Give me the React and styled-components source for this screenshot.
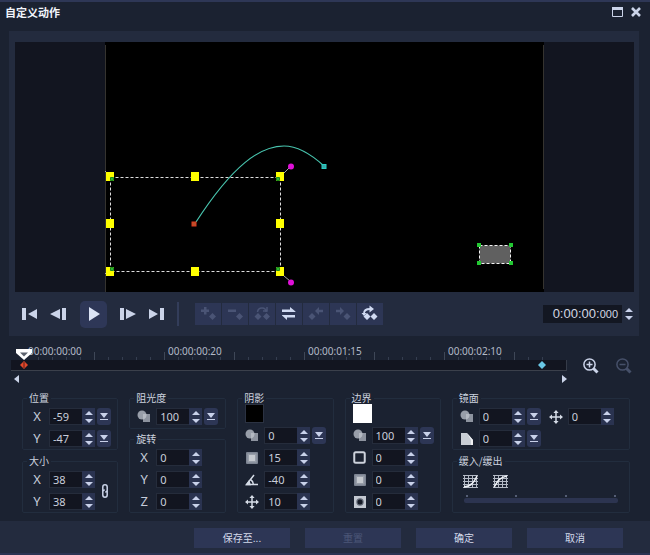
import React, { useId, useState } from "react";
import styled, { createGlobalStyle } from "styled-components";

const GlobalStyle = createGlobalStyle`
  *, *::before, *::after { box-sizing: border-box; }
  body {
    margin: 0;
    background: #1b2231;
    color: #c9d0e0;
    font-family: "Noto Sans", "Noto Sans CJK SC", sans-serif;
    font-size: 10px;
    line-height: 12px;
  }
  button, input { font: inherit; color: inherit; margin: 0; }
  button { border: 0; padding: 0; background: none; }
  svg { display: block; }
`;

const Window = styled.div`
  display: flex;
  flex-direction: column;
  min-height: 100vh;
  border-top: 2px solid #2e3756;
  border-bottom: 2px solid #2b3352;
`;

const TitleBar = styled.header`
  display: flex;
  align-items: center;
  justify-content: space-between;
  height: 29px;
  padding: 0 9px 9px 5px;
`;

const Title = styled.h1`
  margin: 0;
  font-family: "Noto Sans CJK SC", sans-serif;
  font-size: 11px;
  line-height: 18px;
  font-weight: 700;
  color: #f2f5fb;
`;

const WindowButtons = styled.div`
  display: flex;
  gap: 8px;
`;

const Player = styled.section`
  margin: 0 11px 0 9px;
  padding: 11px 5px 0 6px;
  background: #232b3e;
`;

const Stage = styled.div`
  display: grid;
  grid-template-columns: 90fr 439fr 90fr;
  background: #121520;
`;

const StageDrawing = styled.svg`
  grid-column: 2;
  width: 100%;
  background: #000;
`;

const Controls = styled.div`
  display: flex;
  align-items: center;
  height: 44px;
`;

const Transport = styled.div`
  display: flex;
  align-items: center;
  gap: 12px;
  padding-left: 7px;
`;

const PlayButton = styled.button`
  display: grid;
  place-items: center;
  width: 27px;
  height: 27px;
  margin: 0 1px 0 2px;
  border-radius: 5px;
  background: #2e3757;
`;

const Divider = styled.span`
  width: 2px;
  height: 24px;
  margin: 0 16px 0 13px;
  background: #333d5a;
`;

const KeyTools = styled.div`
  display: flex;
  gap: 1px;
`;

const KeyTool = styled.button`
  width: 26px;
  height: 22px;
  background: #2d3655;
  color: ${(p) => (p.disabled ? "#4a5475" : "#d0daf2")};
`;

const TimeField = styled.div`
  display: flex;
  align-items: center;
  gap: 2px;
  margin-left: auto;
`;

const TimeCode = styled.output`
  padding: 0 4px 0 10px;
  background: #131722;
  color: #d3d8e4;
  font-family: "Liberation Sans", sans-serif;
  font-size: 13px;
  line-height: 18px;
  small { font-size: 11px; }
`;

const TimelineBar = styled.section`
  display: grid;
  grid-template-columns: minmax(0, 1fr) auto;
  padding: 8px 18px 0 11px;
`;

const Timeline = styled.div`
  position: relative;
`;

const Ruler = styled.div`
  display: grid;
  grid-template-columns: repeat(4, 140px);
  height: 16px;
  padding-left: 17px;
  overflow: hidden;
  color: #b2b9c6;
  background:
    repeating-linear-gradient(90deg, #3e4757 0 1px, transparent 1px 70px) 13px 100% / 519px 8px no-repeat,
    repeating-linear-gradient(90deg, #353e50 0 1px, transparent 1px 14px) 13px 100% / 519px 3px no-repeat;
`;

const RulerLabel = styled.span`
  justify-self: start;
  height: 13px;
  line-height: 14px;
  background: #1b2231;
`;

const Track = styled.div`
  height: 11px;
  background: #121520;
  border-right: 1px solid #353b48;
  border-bottom: 1px solid #3b404b;
`;

const Marker = styled.svg`
  position: absolute;
  left: ${(p) => p.$left};
  top: ${(p) => p.$top}px;
`;

const ScrollRow = styled.div`
  display: flex;
  justify-content: space-between;
  padding: 4px 0 0 3px;
`;

const ZoomTools = styled.div`
  display: flex;
  align-items: flex-start;
  gap: 16px;
  padding: 14px 0 0 15px;
`;

const Properties = styled.form`
  display: grid;
  grid-template-columns: 96fr 97fr 96fr 96fr 178fr;
  gap: 11px;
  padding: 9px 20px 8px 22px;
`;

const Column = styled.div`
  display: flex;
  flex-direction: column;
  gap: ${(p) => p.$gap || 5}px;
  min-width: 0;
`;

const Group = styled.fieldset`
  flex: ${(p) => (p.$grow ? 1 : "none")};
  min-width: 0;
  margin: 0;
  padding: ${(p) => (p.$flush ? 0 : 4)}px 3px 2px 4px;
  border: 1px solid #222d3e;
  border-radius: 2px;
`;

const Legend = styled.legend`
  padding: 0 2px;
  font-family: "Noto Sans CJK SC", sans-serif;
  line-height: 12px;
  color: #ccd2df;
`;

const Rows = styled.div`
  display: flex;
  flex-direction: column;
  gap: 5px;
`;

const Split = styled.div`
  display: flex;
  align-items: center;
  gap: ${(p) => p.$gap}px;
`;

const FieldRow = styled.div`
  display: flex;
  align-items: center;
  height: 17px;
`;

const FieldLabel = styled.label`
  display: grid;
  place-items: center;
  width: 20px;
  margin-right: 2px;
  font-size: 13px;
  line-height: 17px;
  color: #c5ccda;
`;

const NumberInput = styled.input`
  width: 33px;
  height: 17px;
  padding: 0 3px;
  border: 1px solid #252c3b;
  border-right: 0;
  border-radius: 0;
  background: #121520;
  color: #c9cedb;
  font-size: 11px;
  outline: 0;
`;

const SpinBox = styled.span`
  display: flex;
  flex-direction: column;
  justify-content: center;
  gap: 4px;
  width: ${(p) => (p.$bare ? 10 : 13)}px;
  height: 17px;
  background: ${(p) => (p.$bare ? "transparent" : "#2a3350")};
`;

const SpinButton = styled.button`
  display: grid;
  place-items: center;
  color: #c8d1ea;
`;

const DropButton = styled.button`
  display: grid;
  place-items: center;
  width: 14px;
  height: 17px;
  margin-left: 2px;
  border-radius: 3px;
  background: #2d3655;
  color: #c8d1ea;
`;

const Swatch = styled.button`
  display: block;
  width: 19px;
  height: 19px;
  margin: 0 0 4px 3px;
  border: 1px solid ${(p) => (p.$color === "#000" ? "#2b3242" : "#fff")};
  background: ${(p) => p.$color};
`;

const EaseTools = styled.div`
  display: flex;
  gap: 15px;
  padding: 4px 0 7px 6px;
`;

const EaseTicks = styled.div`
  display: flex;
  justify-content: space-between;
  padding: 0 10px 0 9px;
  i { width: 2px; height: 2px; background: #555e75; }
`;

const EaseSlider = styled.input`
  appearance: none;
  display: block;
  width: calc(100% - 15px);
  height: 5px;
  margin: 1px 8px 0 7px;
  border-radius: 2px;
  background: #2c3450;
  &::-webkit-slider-thumb { appearance: none; width: 0; height: 0; }
`;

const Footer = styled.footer`
  display: flex;
  flex: 1;
  align-items: flex-start;
  justify-content: flex-end;
  gap: 15px;
  padding: 7px 27px 5px;
  background: #232b3e;
`;

const ActionButton = styled.button`
  width: 96px;
  height: 20px;
  background: #2d3655;
  color: ${(p) => (p.disabled ? "#4c5678" : "#d3daea")};
  font-family: "Noto Sans CJK SC", sans-serif;
`;

const IconButton = styled.button`
  display: block;
  color: ${(p) => (p.disabled ? "#465069" : "#cbd4e9")};
`;

function Triangle({ down }) {
  return (
    <svg width="8" height="4" viewBox="0 0 8 4" fill="currentColor">
      <path d={down ? "M0 0h8L4 4z" : "M0 4h8L4 0z"} />
    </svg>
  );
}

function Spinner({ bare, name, onStep }) {
  return (
    <SpinBox $bare={bare}>
      <SpinButton type="button" aria-label={`${name} +`} onClick={() => onStep?.(1)}><Triangle /></SpinButton>
      <SpinButton type="button" aria-label={`${name} -`} onClick={() => onStep?.(-1)}><Triangle down /></SpinButton>
    </SpinBox>
  );
}

function Field({ label, icon, value, drop }) {
  const id = useId();
  const [current, setCurrent] = useState(String(value));
  return (
    <FieldRow>
      <FieldLabel htmlFor={id} aria-label={label}>{icon || label}</FieldLabel>
      <NumberInput id={id} value={current} onChange={(e) => setCurrent(e.target.value)} />
      <Spinner name={label} onStep={(d) => setCurrent(String((Number(current) || 0) + d))} />
      {drop && (
        <DropButton type="button" aria-label={`${label} 选项`}>
          <svg width="8" height="8" viewBox="0 0 8 8" fill="currentColor">
            <path d="M0 0h8L4 5zM0 6h8v1H0z" />
          </svg>
        </DropButton>
      )}
    </FieldRow>
  );
}

const OpacityIcon = (
  <svg width="14" height="13" viewBox="0 0 14 13">
    <path d="M6 4h7v8H6z" fill="#8d939f" />
    <circle cx="5" cy="5" r="4.500" fill="#989ea9" />
    <path d="M6 4h3.400A4.500 4.500 0 0 1 6 9.400z" fill="#b4b9c2" />
  </svg>
);
const SoftIcon = (
  <svg width="12" height="12" viewBox="0 0 12 12">
    <rect width="12" height="12" rx="1" fill="#7d8492" />
    <rect x="1.500" y="1.500" width="9" height="9" fill="#989ea9" />
    <rect x="3" y="3" width="6" height="6" fill="#c5c9cf" />
  </svg>
);
const AngleIcon = (
  <svg width="14" height="12" viewBox="0 0 14 12" fill="none" stroke="#d5dbe6" strokeWidth="1.500">
    <path d="M9 1L1.500 10.500H13M5.500 5.500Q8 7 8.500 10.500" />
    <path d="M4 7.500L2 10.500H5z" fill="#d5dbe6" />
  </svg>
);
const MoveIcon = (
  <svg width="14" height="14" viewBox="0 0 14 14">
    <path d="M7 2v10M2 7h10" stroke="#d5dbe6" strokeWidth="1.500" />
    <path d="M7 0l2.600 3H4.400zM7 14l2.600-3H4.400zM0 7l3-2.600v5.200zM14 7l-3-2.600v5.200z" fill="#d5dbe6" />
  </svg>
);
const FrameIcon = (
  <svg width="13" height="13" viewBox="0 0 13 13">
    <rect x="1.250" y="1.250" width="10.500" height="10.500" rx="1.500" fill="none" stroke="#cdd2dc" strokeWidth="2" />
  </svg>
);
const BlurDotIcon = (
  <svg width="12" height="12" viewBox="0 0 12 12">
    <rect width="12" height="12" fill="#c3c8d1" />
    <circle cx="6" cy="6" r="3.700" fill="#636a77" />
    <circle cx="6" cy="6" r="2.500" fill="#151a26" />
  </svg>
);
const FadeIcon = (
  <svg width="14" height="12" viewBox="0 0 14 12">
    <path d="M1 0h6l6 7v5H1z" fill="#c9ced6" />
    <path d="M7 0l6 7v5h-2V7z" fill="#eef0f3" />
  </svg>
);

function EaseIcon({ out }) {
  return (
    <svg width="15" height="13" viewBox="0 0 15 13" fill="none">
      <path d="M0 .5h15M0 3.500h15M0 6.500h15M0 9.500h15M0 12.500h15M1.500 0v13M5.500 0v13M9.500 0v13M13.500 0v13" stroke="#b4bac6" strokeWidth="1" />
      <path d={out ? "M1 12C4 9 4 3 14 1" : "M1 12C9 11 11 7 14 1"} stroke="#eef1f6" strokeWidth="1.600" />
    </svg>
  );
}

const keyTools = [
  { name: "添加关键帧", off: true, art: <><path d="M9 4h2.500v2.500H14V9h-2.500v2.500H9V9H6V6.500h3z" /><path d="M17.500 10l3.500 3.500-3.500 3.500-3.500-3.500z" /></> },
  { name: "移除关键帧", off: true, art: <><path d="M6 6.500h8V9H6z" /><path d="M17.500 10l3.500 3.500-3.500 3.500-3.500-3.500z" /></> },
  { name: "旋转关键帧", off: true, art: <><path d="M9 10l3.500 3.500L9 17l-3.500-3.500zM17.500 10l3.500 3.500-3.500 3.500-3.500-3.500z" /><path d="M8.500 9Q9 5 13 5q4 0 4 4M14 8h4V4" fill="none" stroke="currentColor" strokeWidth="1.500" /></> },
  { name: "反转关键帧", art: <path d="M6 6.500h8V4l5.500 4.500V9H6zM19 12v2.500h-8V17L6 12.500V12z" /> },
  { name: "左移关键帧", off: true, art: <><path d="M9 10l3.500 3.500L9 17l-3.500-3.500z" /><path d="M12 8l4-4v2.700h4v2.600h-4V12z" /></> },
  { name: "右移关键帧", off: true, art: <><path d="M17 10l3.500 3.500L17 17l-3.500-3.500z" /><path d="M14 8l-4-4v2.700H6v2.600h4V12z" /></> },
  { name: "定位中心", art: <><path d="M10 10l3.500 3.500L10 17l-3.500-3.500zM17 10l3.500 3.500L17 17l-3.500-3.500z" /><path d="M7 10.500Q7 6 13 6" fill="none" stroke="currentColor" strokeWidth="1.800" /><path d="M12.500 2.500L17 6l-4.500 3.500zM4.500 10h5L7 13z" /></> },
];

const handles = [[1, 130], [86, 130], [171, 130], [1, 177], [171, 177], [1, 225], [86, 225], [171, 225]];

function Scene() {
  return (
    <StageDrawing viewBox="0 0 439 250" role="img" aria-label="动作路径">
      <path d="M.5 3v247M438.500 3v244" stroke="#35332f" />
      <path d="M0 129l3 3M0 232l3-3M179 131l6-6M179 234l6 5" stroke="#aaa" />
      <rect x="5.500" y="135.500" width="170" height="94" fill="none" stroke="#dedede" strokeDasharray="3 2" />
      <path d="M91 180C128 123 155 104 179 104C194 104 207 113 219 124" fill="none" stroke="#48c4ae" strokeWidth="1.200" />
      {handles.map(([x, y]) => <rect key={`${x}-${y}`} x={x} y={y} width="8" height="9" fill="#ff0" />)}
      <g fill="#2fb533" stroke="#1c8a18">
        <path d="M5.500 135.500h3v3h-3zM171.500 135.500h3v3h-3zM5.500 225.500h3v3h-3zM171.500 225.500h3v3h-3z" />
      </g>
      <circle cx="186" cy="124.500" r="3" fill="#e010d8" />
      <circle cx="186" cy="240.500" r="3" fill="#e010d8" />
      <rect x="87" y="180" width="4" height="4" fill="#b5532f" stroke="#e03a1c" />
      <rect x="217" y="122.500" width="4" height="4" fill="#3aa8a8" stroke="#25cfc4" />
      <rect x="374.500" y="203.500" width="31" height="18" fill="#606060" stroke="#f3f3f3" strokeDasharray="3 2" />
      <path d="M372 201h4v4h-4zM404 201h4v4h-4zM372 219h4v4h-4zM404 219h4v4h-4z" fill="#22c832" />
    </StageDrawing>
  );
}

export default function App() {
  return (
    <>
      <GlobalStyle />
      <Window>
        <TitleBar>
          <Title>自定义动作</Title>
          <WindowButtons>
            <IconButton type="button" aria-label="最大化">
              <svg width="11" height="10" viewBox="0 0 11 10"><path d="M.5 1v8.500h10V1z" fill="none" stroke="currentColor" /><path d="M0 0h11v3H0z" fill="currentColor" /></svg>
            </IconButton>
            <IconButton type="button" aria-label="关闭">
              <svg width="10" height="10" viewBox="0 0 10 10" stroke="currentColor" strokeWidth="2.600"><path d="M1 1l8 8M9 1L1 9" /></svg>
            </IconButton>
          </WindowButtons>
        </TitleBar>

        <Player>
          <Stage><Scene /></Stage>
          <Controls>
            <Transport>
              <IconButton type="button" aria-label="起始">
                <svg width="16" height="12" viewBox="0 0 16 12" fill="currentColor"><path d="M0 0h4v12H0zM15 1v10L6 6z" /></svg>
              </IconButton>
              <IconButton type="button" aria-label="上一帧">
                <svg width="16" height="12" viewBox="0 0 16 12" fill="currentColor"><path d="M12 0h4v12h-4zM10 1v10L0 6z" /></svg>
              </IconButton>
              <PlayButton type="button" aria-label="播放">
                <svg width="12" height="14" viewBox="0 0 12 14" fill="#dbe3f5"><path d="M1 0l11 7-11 7z" /></svg>
              </PlayButton>
              <IconButton type="button" aria-label="下一帧">
                <svg width="16" height="12" viewBox="0 0 16 12" fill="currentColor"><path d="M0 0h4v12H0zM6 1v10l10-5z" /></svg>
              </IconButton>
              <IconButton type="button" aria-label="结束">
                <svg width="16" height="12" viewBox="0 0 16 12" fill="currentColor"><path d="M12 0h4v12h-4zM1 1v10l9-5z" /></svg>
              </IconButton>
            </Transport>
            <Divider />
            <KeyTools>
              {keyTools.map((t) => (
                <KeyTool key={t.name} type="button" aria-label={t.name} disabled={t.off}>
                  <svg width="26" height="22" viewBox="0 0 26 22" fill="currentColor">{t.art}</svg>
                </KeyTool>
              ))}
            </KeyTools>
            <TimeField>
              <TimeCode>0:00:00:<small>000</small></TimeCode>
              <Spinner bare name="时间码" />
            </TimeField>
          </Controls>
        </Player>

        <TimelineBar>
          <Timeline>
            <Ruler>
              {["00:00:00:00", "00:00:00:20", "00:00:01:15", "00:00:02:10"].map((t) => <RulerLabel key={t}>{t}</RulerLabel>)}
            </Ruler>
            <Track />
            <Marker $left="5px" $top={5} width="16" height="11" viewBox="0 0 16 11">
              <path d="M0 0h16v4L8 11 0 4z" fill="#fff" /><path d="M4 3.500h8L8 7.500z" fill="#5b616c" />
            </Marker>
            <Marker $left="9px" $top={17} width="8" height="8" viewBox="0 0 8 8">
              <path d="M4 0l4 4-4 4-4-4z" fill="#e4482a" /><path d="M3.500 1h1v6h-1z" fill="#541e1b" />
            </Marker>
            <Marker $left="calc(100% - 29px)" $top={17} width="8" height="8" viewBox="0 0 8 8">
              <path d="M4 0l4 4-4 4-4-4z" fill="#69c8e6" />
            </Marker>
            <ScrollRow>
              <IconButton type="button" aria-label="向左滚动"><svg width="5" height="8" viewBox="0 0 5 8" fill="currentColor"><path d="M5 0v8L0 4z" /></svg></IconButton>
              <IconButton type="button" aria-label="向右滚动"><svg width="5" height="8" viewBox="0 0 5 8" fill="currentColor"><path d="M0 0v8l5-4z" /></svg></IconButton>
            </ScrollRow>
          </Timeline>
          <ZoomTools>
            {[false, true].map((out) => (
              <IconButton key={String(out)} type="button" disabled={out} aria-label={out ? "缩小" : "放大"}>
                <svg width="17" height="16" viewBox="0 0 17 16" fill="none" stroke="currentColor" strokeWidth="1.500">
                  <circle cx="7.500" cy="6.500" r="5.600" />
                  <path d={out ? "M4.500 6.500h6" : "M4.500 6.500h6M7.500 3.500v6"} />
                  <path d="M11.500 10.500l4 4" strokeWidth="3" />
                </svg>
              </IconButton>
            ))}
          </ZoomTools>
        </TimelineBar>

        <Properties onSubmit={(e) => e.preventDefault()}>
          <Column>
            <Group>
              <Legend>位置</Legend>
              <Rows>
                <Field label="X" value={-59} drop />
                <Field label="Y" value={-47} drop />
              </Rows>
            </Group>
            <Group>
              <Legend>大小</Legend>
              <Split $gap={6}>
                <Rows>
                  <Field label="X" value={38} />
                  <Field label="Y" value={38} />
                </Rows>
                <IconButton type="button" aria-label="锁定比例">
                  <svg width="8" height="14" viewBox="0 0 8 14" fill="none" stroke="currentColor" strokeWidth="1.500">
                    <path d="M2.500 7.500h-.7V3a2.200 2.200 0 0 1 4.400 0v3a2 2 0 0 1-2 2M5.500 6.500h.7V11a2.200 2.200 0 0 1-4.400 0V8a2 2 0 0 1 2-2" />
                  </svg>
                </IconButton>
              </Split>
            </Group>
          </Column>

          <Column $gap={4}>
            <Group $grow>
              <Legend>阻光度</Legend>
              <Field label="阻光度" icon={OpacityIcon} value={100} drop />
            </Group>
            <Group>
              <Legend>旋转</Legend>
              <Rows>
                <Field label="X" value={0} />
                <Field label="Y" value={0} />
                <Field label="Z" value={0} />
              </Rows>
            </Group>
          </Column>

          <Column>
            <Group $grow $flush>
              <Legend>阴影</Legend>
              <Swatch type="button" $color="#000" aria-label="阴影颜色" />
              <Rows>
                <Field label="阴影阻光度" icon={OpacityIcon} value={0} drop />
                <Field label="阴影模糊" icon={SoftIcon} value={15} />
                <Field label="阴影方向" icon={AngleIcon} value={-40} />
                <Field label="阴影距离" icon={MoveIcon} value={10} />
              </Rows>
            </Group>
          </Column>

          <Column>
            <Group $grow $flush>
              <Legend>边界</Legend>
              <Swatch type="button" $color="#fff" aria-label="边界颜色" />
              <Rows>
                <Field label="边界阻光度" icon={OpacityIcon} value={100} drop />
                <Field label="边界尺寸" icon={FrameIcon} value={0} />
                <Field label="边界模糊" icon={SoftIcon} value={0} />
                <Field label="边界柔化" icon={BlurDotIcon} value={0} />
              </Rows>
            </Group>
          </Column>

          <Column>
            <Group>
              <Legend>镜面</Legend>
              <Rows>
                <Split $gap={5}>
                  <Field label="镜面阻光度" icon={OpacityIcon} value={0} drop />
                  <Field label="镜面距离" icon={MoveIcon} value={0} />
                </Split>
                <Field label="镜面淡出" icon={FadeIcon} value={0} drop />
              </Rows>
            </Group>
            <Group $grow>
              <Legend>缓入/缓出</Legend>
              <EaseTools>
                <IconButton type="button" aria-label="缓入"><EaseIcon /></IconButton>
                <IconButton type="button" aria-label="缓出"><EaseIcon out /></IconButton>
              </EaseTools>
              <EaseTicks><i /><i /><i /><i /></EaseTicks>
              <EaseSlider type="range" aria-label="缓入/缓出" />
            </Group>
          </Column>
        </Properties>

        <Footer>
          <ActionButton type="button">保存至...</ActionButton>
          <ActionButton type="button" disabled>重置</ActionButton>
          <ActionButton type="button">确定</ActionButton>
          <ActionButton type="button">取消</ActionButton>
        </Footer>
      </Window>
    </>
  );
}
